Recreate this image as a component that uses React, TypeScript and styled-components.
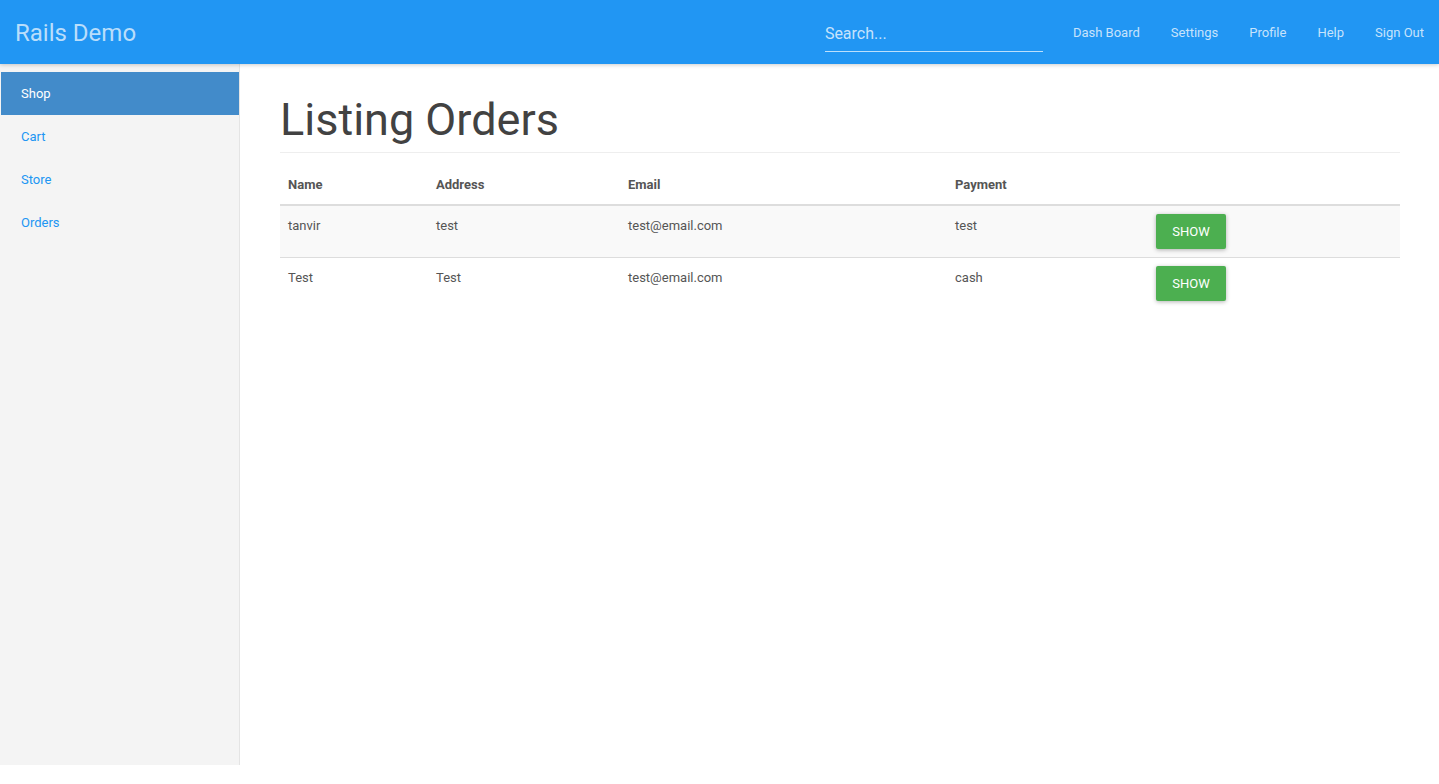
import React from 'react';
import styled, { createGlobalStyle } from 'styled-components';

const GlobalStyle = createGlobalStyle`
  html, body {
    margin: 0;
    padding: 0;
    background: #fff;
    font-family: Roboto, "Liberation Sans", Arial, sans-serif;
    font-size: 13px;
    color: #555;
  }
  * {
    box-sizing: border-box;
  }
`;

const Navbar = styled.header`
  position: relative;
  z-index: 2;
  display: flex;
  align-items: center;
  height: 64px;
  background: #2196f3;
  box-shadow: 0 1px 4px rgba(0, 0, 0, 0.2);
`;

const Brand = styled.a`
  padding: 2px 15px 0;
  font-size: 24px;
  color: rgba(255, 255, 255, 0.7);
  text-decoration: none;
`;

const Spacer = styled.div`
  flex: 1;
`;

const SearchInput = styled.input`
  width: 218px;
  height: 36px;
  margin: 4px 15px 0 0;
  padding: 0;
  border: none;
  border-bottom: 1px solid rgba(255, 255, 255, 0.7);
  background: transparent;
  font-family: Roboto, "Liberation Sans", Arial, sans-serif;
  font-size: 16px;
  color: #fff;
  outline: none;

  &::placeholder {
    color: rgba(255, 255, 255, 0.75);
  }
`;

const NavLinks = styled.nav`
  display: flex;
  align-items: center;
  padding-top: 2px;
`;

const NavLink = styled.a`
  padding: 0 15px 0 16px;
  line-height: 62px;
  font-size: 13px;
  color: rgba(255, 255, 255, 0.75);
  text-decoration: none;

  &:first-child {
    padding-left: 15px;
  }
`;

const Body = styled.div`
  display: flex;
  align-items: flex-start;
`;

const Sidebar = styled.aside`
  flex: 0 0 240px;
  height: 701px;
  padding: 8px 0 0 1px;
  background: #f4f4f4;
  border-right: 1px solid #e4e4e4;
`;

const SideItem = styled.a<{ $active?: boolean }>`
  display: block;
  height: 43px;
  padding: 0 20px;
  line-height: 43px;
  font-size: 13px;
  text-decoration: none;
  background: ${(p) => (p.$active ? '#428bca' : 'transparent')};
  color: ${(p) => (p.$active ? '#fff' : '#2196f3')};
`;

const Main = styled.main`
  flex: 1;
  padding: 0 39px 0 40px;
`;

const PageHeader = styled.div`
  margin: 31px 0 13px;
  padding-bottom: 7px;
  border-bottom: 1px solid #eee;
`;

const Title = styled.h1`
  margin: 0;
  font-size: 45px;
  font-weight: 400;
  line-height: 1.1;
  color: #424242;
`;

const Table = styled.table`
  width: 100%;
  border-collapse: collapse;
  border-spacing: 0;
`;

const Th = styled.th`
  padding: 8px;
  line-height: 22px;
  text-align: left;
  font-weight: 700;
  font-size: 13px;
  color: #555;
  border-bottom: 2px solid #ddd;
`;

const Row = styled.tr<{ $striped?: boolean }>`
  background: ${(p) => (p.$striped ? '#f9f9f9' : 'transparent')};
  border-bottom: 1px solid #ddd;

  &:last-child {
    border-bottom: none;
  }
`;

const Td = styled.td`
  padding: 8px;
  line-height: 24px;
  vertical-align: top;
  font-size: 13px;
  color: #555;
`;

const ShowButton = styled.a`
  display: inline-block;
  vertical-align: top;
  width: 70px;
  height: 35px;
  line-height: 35px;
  text-align: center;
  font-size: 13px;
  color: #fff;
  background: #4caf50;
  border-radius: 2px;
  text-decoration: none;
  text-transform: uppercase;
  box-shadow: 0 1px 4px rgba(0, 0, 0, 0.3);
`;

const orders = [
  { name: 'tanvir', address: 'test', email: 'test@email.com', payment: 'test' },
  { name: 'Test', address: 'Test', email: 'test@email.com', payment: 'cash' },
];

const App: React.FC = () => {
  return (
    <>
      <GlobalStyle />
      <Navbar>
        <Brand href="#">Rails Demo</Brand>
        <Spacer />
        <SearchInput placeholder="Search..." />
        <NavLinks>
          <NavLink href="#">Dash Board</NavLink>
          <NavLink href="#">Settings</NavLink>
          <NavLink href="#">Profile</NavLink>
          <NavLink href="#">Help</NavLink>
          <NavLink href="#">Sign Out</NavLink>
        </NavLinks>
      </Navbar>
      <Body>
        <Sidebar>
          <SideItem href="#" $active>Shop</SideItem>
          <SideItem href="#">Cart</SideItem>
          <SideItem href="#">Store</SideItem>
          <SideItem href="#">Orders</SideItem>
        </Sidebar>
        <Main>
          <PageHeader>
            <Title>Listing Orders</Title>
          </PageHeader>
          <Table>
            <colgroup>
              <col style={{ width: 148 }} />
              <col style={{ width: 192 }} />
              <col style={{ width: 327 }} />
              <col style={{ width: 201 }} />
              <col />
            </colgroup>
            <thead>
              <tr>
                <Th>Name</Th>
                <Th>Address</Th>
                <Th>Email</Th>
                <Th>Payment</Th>
                <Th />
              </tr>
            </thead>
            <tbody>
              {orders.map((o, i) => (
                <Row key={i} $striped={i % 2 === 0}>
                  <Td>{o.name}</Td>
                  <Td>{o.address}</Td>
                  <Td>{o.email}</Td>
                  <Td>{o.payment}</Td>
                  <Td>
                    <ShowButton href="#">Show</ShowButton>
                  </Td>
                </Row>
              ))}
            </tbody>
          </Table>
        </Main>
      </Body>
    </>
  );
};

export default App;
